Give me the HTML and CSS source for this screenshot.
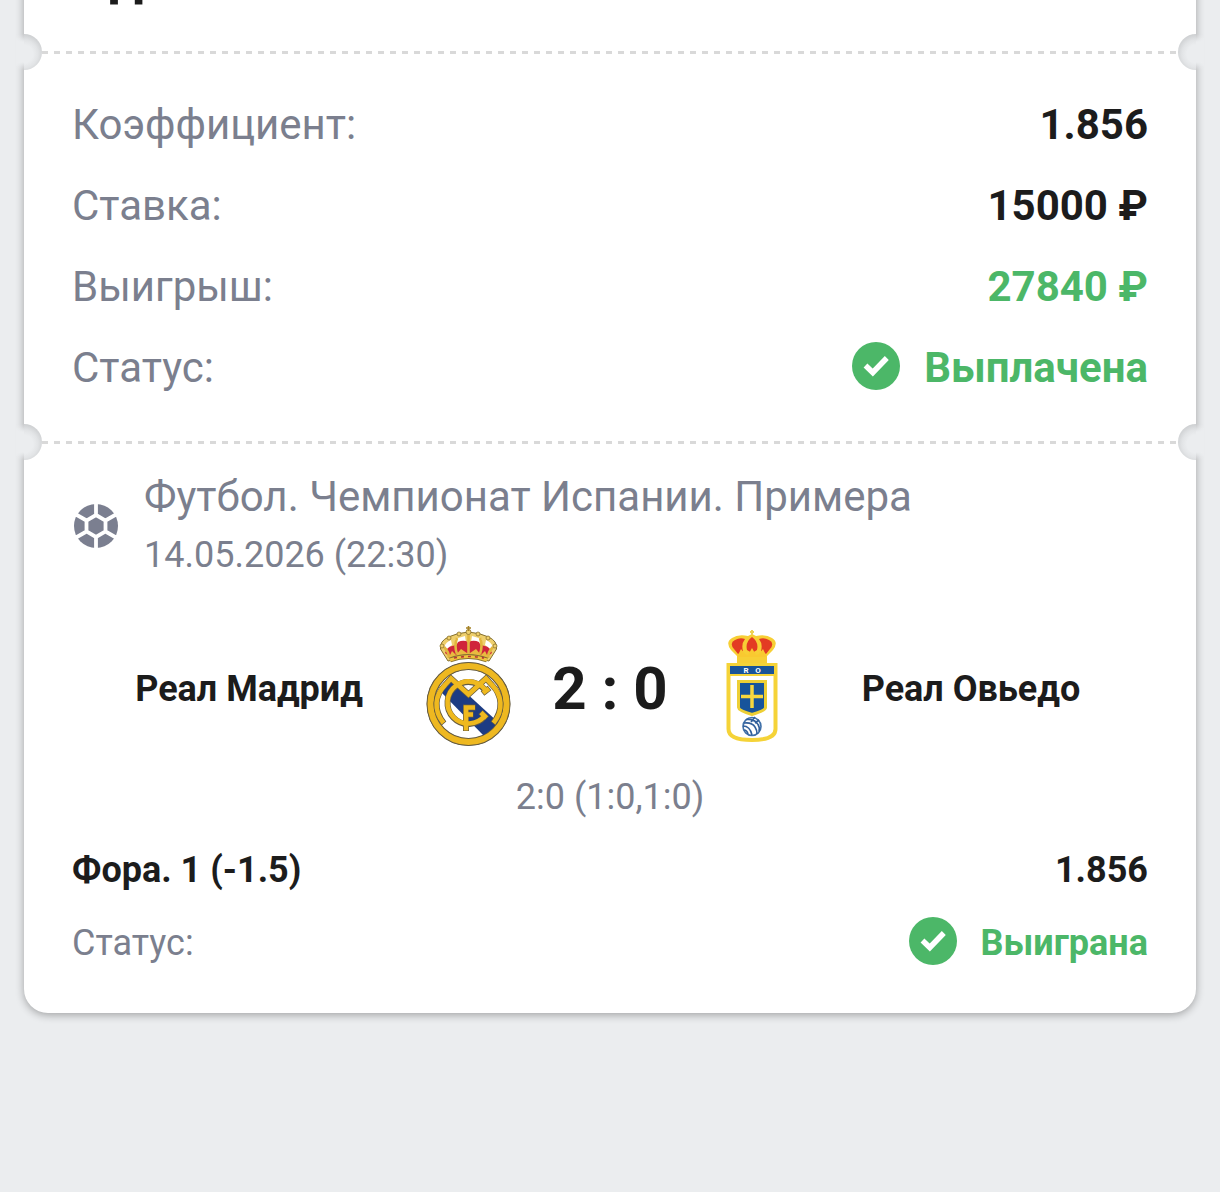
FILE: index.html
```html
<!DOCTYPE html>
<html lang="ru">
<head>
<meta charset="utf-8">
<meta name="viewport" content="width=device-width, initial-scale=1">
<title>Купон</title>
<link rel="stylesheet" href="styles.css">
</head>
<body>
<main class="page">
  <article class="ticket">
    <header class="ticket-head"><h1 class="ticket-title">Одиночная</h1></header>
    <div class="tear"></div>
    <dl class="summary">
      <div class="row"><dt>Коэффициент:</dt><dd>1.856</dd></div>
      <div class="row"><dt>Ставка:</dt><dd>15000 ₽</dd></div>
      <div class="row"><dt>Выигрыш:</dt><dd class="good">27840 ₽</dd></div>
      <div class="row"><dt>Статус:</dt><dd class="good status">
        <svg class="check" viewBox="0 0 48 48" aria-hidden="true"><circle cx="24" cy="24" r="24" fill="#4cb768"/><path d="M13.500 23.500l7.300 7 14-14.500" fill="none" stroke="#fff" stroke-width="5.500"/></svg>
        <span>Выплачена</span></dd></div>
    </dl>
    <div class="tear"></div>
    <section class="event">
      <div class="league">
        <svg class="ball" viewBox="0 0 48 48" aria-hidden="true">
          <circle cx="24" cy="24" r="22" fill="#7b7f90"/>
          <path d="M24 0v13M24 35v13M33.500 18.500L44 12.500M33.500 29.500L44 35.500M14.500 18.500L4 12.500M14.500 29.500L4 35.500M24 13l9.500 5.500v11L24 35l-9.500-5.500v-11z" fill="none" stroke="#fff" stroke-width="3.800"/>
        </svg>
        <div>
          <h2 class="league-name">Футбол. Чемпионат Испании. Примера</h2>
          <time class="date" datetime="2026-05-14T22:30">14.05.2026 (22:30)</time>
        </div>
      </div>
      <div class="match">
        <span class="team">Реал Мадрид</span>
        <svg class="crest" viewBox="0 0 120 120" role="img" aria-label="Реал Мадрид">
          <path d="M40 35L32.500 23q-1-8 8-12 8-4 20-5 12 1 20 5 9 4 8 12L81 35q-20-6-41 0z" fill="#eecf6c" stroke="#85702f"/>
          <path d="M36 21q2-5 7-7l1 5-5 4zM85 21q-2-5-7-7l-1 5 5 4zM47 13l10-3 1 6-9 2zM74 13l-10-3-1 6 9 2z" fill="#fff"/>
          <path d="M37 27q2-6 7-7 5-1 6-4 4-2 8-1 2 1 2.500 3 .5-2 2.500-3 4-1 8 1 1 3 6 4 5 1 7 7l-5 4q-18-5-37 0z" fill="#d0243b"/>
          <path d="M36 21q5 5 5 11M49 12q-3 8 0 16M60.500 8v20M72 12q3 8 0 16M85 21q-5 5-5 11" fill="none" stroke="#e2b63d" stroke-width="2.600"/>
          <path d="M41 31l3-6 4 4 5-6 7.500 5 7.500-5 5 6 4-4 3 6-2 2q-19-5-35 0z" fill="#e9ba40"/>
          <path d="M42 34q18-7 37 0" stroke="#85702f" stroke-width="5" fill="none"/>
          <path d="M42 34q18-7 37 0" stroke="#efc43d" stroke-width="3" fill="none"/>
          <path d="M46 32q15-3 30 0" stroke="#b5343a" stroke-width="1.600" fill="none" stroke-dasharray="3 4"/>
          <g fill="#f0d06a" stroke="#8d7430" stroke-width=".8"><circle cx="60.500" cy="6" r="2.500"/><circle cx="51" cy="8" r="2"/><circle cx="70" cy="8" r="2"/><circle cx="41" cy="12" r="2"/><circle cx="80" cy="12" r="2"/><circle cx="34" cy="20" r="2"/><circle cx="87" cy="20" r="2"/></g>
          <path d="M60.500 0v5M58 2h5" stroke="#a58225" stroke-width="1.600"/>
          <circle cx="60.500" cy="78" r="38" fill="#fff" stroke="#665c40" stroke-width="8"/>
          <path d="M33 66l11-12 47 43-15 13z" fill="#1d3c83"/>
          <circle cx="60.500" cy="78" r="38" fill="none" stroke="#665c40" stroke-width="7.600"/>
          <circle cx="60.500" cy="78" r="38" fill="none" stroke="#eeb820" stroke-width="6"/>
          <g fill="none" stroke="#665c40" stroke-width="6">
            <path d="M36 97.500C25 84 27 69 37 59l6-6.500 17.500 16L78 52.500l6 6.500c10 10 12 25 1 38.500"/>
            <path d="M79 67a21 21 0 1 0-2 23M74.500 67.500l7-5.500M72.500 86l6.500 6.500"/>
            <path d="M58 105V81.500h9.500M58 88.500h7.500"/>
          </g>
          <g fill="none" stroke="#efb91e" stroke-width="4.600">
            <path d="M35.500 97C25 84 27 69 37 59l6-6.500 17.500 16L78 52.500l6 6.500c10 10 12 25 1.500 38"/>
            <path d="M79 66.500a21 21 0 1 0-2 23M75 67l6-4.500M73 86.500l5.500 5.500"/>
            <path d="M58 104.500V81.500h9M58 88.500h7"/>
          </g>
        </svg>
        <strong class="score">2 : 0</strong>
        <svg class="crest" viewBox="0 0 120 120" role="img" aria-label="Реал Овьедо">
          <path d="M45 37v-7l-6-6q-6-8 1-12 6-4 16-2l4-2 4 2q10-2 16 2 7 4 1 12l-6 6v7z" fill="#f7cf35"/>
          <path d="M42 23q-5-6 1-9 5-3 10-1-4 5-2 12l-5 3zM78 23q5-6-1-9-5-3-10-1 4 5 2 12l5 3zM55 24q-2-8 5-13 7 5 5 13l-5 3z" fill="#e33b23"/>
          <path d="M46 29l3-6 4 5 3 1 4-7 4 7 3-1 4-5 3 6v2H46z" fill="#f9c930"/>
          <path d="M60 4v5M58 6h4" stroke="#edd255" stroke-width="2"/>
          <path d="M36.500 39h47v64q0 11-23.500 11t-23.500-11z" fill="#fff" stroke="#f5d338" stroke-width="4"/>
          <rect x="38" y="40" width="44" height="8" fill="#1a5499"/><path d="M38 49h44" stroke="#f5d338" stroke-width="2"/>
          <text x="54" y="47" text-anchor="middle" class="crest-letter">R</text><text x="66" y="47" text-anchor="middle" class="crest-letter">O</text>
          <path d="M46.500 55.500h27v26q0 3-13.500 7-13.500-4-13.500-7z" fill="#17549b" stroke="#edcf35" stroke-width="3"/>
          <path d="M60 59v23M49 70.500h22" stroke="#f7d73e" stroke-width="3.500"/>
          <circle cx="60" cy="100.500" r="9" fill="#fff" stroke="#3f70a9" stroke-width="1.600"/>
          <path d="M52 97q8-1 11 4 2 3 2 7M54 93.500q9-1 12 5 2 3 1 7M51 100q7 0 9 9M59 96l4-5M63 97l4-3M52 104q3 0 4 4" fill="none" stroke="#315f9b" stroke-width="1.600"/>
        </svg>
        <span class="team">Реал Овьедо</span>
      </div>
      <p class="periods">2:0 (1:0,1:0)</p>
      <div class="pick"><span>Фора. 1 (-1.5)</span><span>1.856</span></div>
      <dl class="result"><dt>Статус:</dt><dd class="good status">
        <svg class="check" viewBox="0 0 48 48" aria-hidden="true"><circle cx="24" cy="24" r="24" fill="#4cb768"/><path d="M13.500 23.500l7.300 7 14-14.500" fill="none" stroke="#fff" stroke-width="5.500"/></svg>
        <span>Выиграна</span></dd></dl>
    </section>
  </article>
</main>
</body>
</html>
```
FILE: styles.css
```css
* { box-sizing: border-box; }
body {
  margin: 0;
  background: #ebedef;
  color: #1c1c1c;
  font-family: Roboto, "Liberation Sans", sans-serif;
}
h1, h2, p, dl, dd { margin: 0; }
.page { min-height: 100vh; overflow: hidden; padding: 0 24px 24px; }
.ticket {
  margin-top: -80px;
  background: #fff;
  border-radius: 24px;
  box-shadow: 0 2px 8px rgba(0, 0, 0, .32);
}
.ticket-head { padding: 26px 48px 24px; }
.ticket-title { font-size: 54px; line-height: 64px; font-weight: 700; }

/* Perforated line with a half-round notch at each end */
.tear {
  position: relative;
  height: 36px;
  background: repeating-linear-gradient(90deg, #d9d9d9 0 6px, transparent 6px 12px) 18px 50% / calc(100% - 36px) 3px no-repeat;
}
.tear::before, .tear::after {
  content: "";
  position: absolute;
  top: 0;
  width: 26px;
  height: 36px;
  border-radius: 0 18px 18px 0;
  background:
    linear-gradient(transparent, #ebedef 8px, #ebedef 28px, transparent) 0 0 / 8px 100% no-repeat,
    radial-gradient(circle at 0 20px, #ebedef 9px, #e2e4e6 14px, #cdcfd1 20px) 8px 0 / 18px 100% no-repeat;
}
.tear::before { left: -8px; }
.tear::after { right: -8px; transform: scaleX(-1); }

.summary {
  display: grid;
  gap: 24px;
  padding: 26px 48px 28px;
  font-size: 42px;
  line-height: 57px;
}
.row, .pick, .result { display: flex; justify-content: space-between; align-items: center; }
dt { color: #7b7f8e; }
dd { font-weight: 700; }
.good { color: #4cb768; }
.status { display: flex; align-items: center; gap: 24px; }
.check { width: 48px; height: 48px; flex: none; margin-bottom: 4px; }

.event { padding: 7px 48px 43px; }
.league { display: flex; align-items: center; gap: 24px; color: #7b7f8e; }
.ball { width: 48px; height: 48px; flex: none; }
.league-name { font-size: 42px; line-height: 60px; font-weight: 400; }
.date { display: block; font-size: 36px; line-height: 57px; }
.match {
  display: grid;
  grid-template-columns: 1fr 120px 164px 120px 1fr;
  align-items: center;
  margin-top: 42px;
  padding: 0 18px;
}
.team, .score { padding-top: 6px; text-align: center; }
.team { font-size: 36px; line-height: 48px; font-weight: 700; }
.crest { width: 120px; height: 120px; }
.crest-letter { fill: #fff; font: 700 8px Roboto, sans-serif; }
.score { font-size: 60px; line-height: 72px; }
.periods { margin-top: 24px; color: #7b7f8e; font-size: 36px; line-height: 54px; text-align: center; }
.pick { margin-top: 18px; font-size: 36px; line-height: 56px; font-weight: 700; }
.result { margin-top: 18px; font-size: 36px; line-height: 54px; }
```
